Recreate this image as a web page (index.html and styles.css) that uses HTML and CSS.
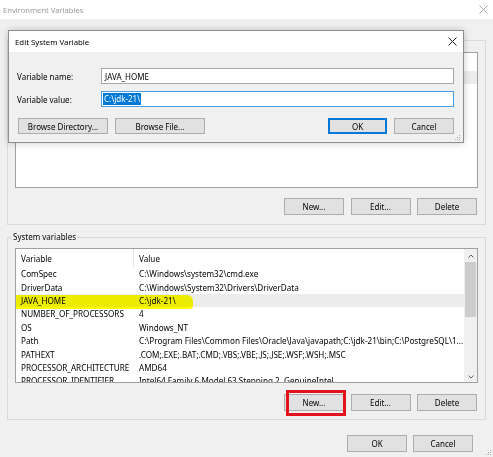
FILE: index.html
```html
<!DOCTYPE html>
<html>
<head>
<meta charset="utf-8">
<title>Environment Variables</title>
<link rel="stylesheet" href="styles.css">
</head>
<body>
<div class="window">
  <div class="titlebar">
    <span class="title">Environment Variables</span>
    <svg class="close-main" width="9" height="9" viewBox="0 0 9 9"><path d="M0.5 0.5 L8.5 8.5 M8.5 0.5 L0.5 8.5" stroke="#a8a8a8" stroke-width="1" fill="none"/></svg>
  </div>

  <div class="group user">
    <div class="group-label blank"></div>
    <div class="list">
      <div class="list-body">
        <div class="lhead"></div>
        <div class="row sel"></div>
      </div>
    </div>
    <div class="btnrow">
      <div class="btn">New...</div>
      <div class="btn">Edit...</div>
      <div class="btn">Delete</div>
    </div>
  </div>

  <div class="group system">
    <div class="group-label">System variables</div>
    <div class="list">
      <div class="list-body">
        <div class="lhead"><span class="c1">Variable</span><span class="c2">Value</span></div>
        <div class="row"><span class="c1">ComSpec</span><span class="c2">C:\Windows\system32\cmd.exe</span></div>
        <div class="row"><span class="c1">DriverData</span><span class="c2">C:\Windows\System32\Drivers\DriverData</span></div>
        <div class="row sel"><span class="mark"></span><span class="c1">JAVA_HOME</span><span class="c2">C:\jdk-21\</span></div>
        <div class="row"><span class="c1">NUMBER_OF_PROCESSORS</span><span class="c2">4</span></div>
        <div class="row"><span class="c1">OS</span><span class="c2">Windows_NT</span></div>
        <div class="row"><span class="c1">Path</span><span class="c2">C:\Program Files\Common Files\Oracle\Java\javapath;C:\jdk-21\bin;C:\PostgreSQL\1...</span></div>
        <div class="row"><span class="c1">PATHEXT</span><span class="c2">.COM;.EXE;.BAT;.CMD;.VBS;.VBE;.JS;.JSE;.WSF;.WSH;.MSC</span></div>
        <div class="row"><span class="c1">PROCESSOR_ARCHITECTURE</span><span class="c2">AMD64</span></div>
        <div class="row"><span class="c1">PROCESSOR_IDENTIFIER</span><span class="c2">Intel64 Family 6 Model 63 Stepping 2, GenuineIntel</span></div>
      </div>
      <div class="scrollbar">
        <div class="sb-arrow">
          <svg width="6" height="4" viewBox="0 0 6 4"><path d="M0.5 3.5 L3 1 L5.5 3.5" stroke="#606060" stroke-width="1" fill="none"/></svg>
        </div>
        <div class="sb-track"><div class="sb-thumb"></div></div>
        <div class="sb-arrow down">
          <svg width="6" height="4" viewBox="0 0 6 4"><path d="M0.5 0.5 L3 3 L5.5 0.5" stroke="#606060" stroke-width="1" fill="none"/></svg>
        </div>
      </div>
    </div>
    <div class="btnrow">
      <div class="btn-wrap"><div class="btn">New...</div><div class="redbox"></div></div>
      <div class="btn">Edit...</div>
      <div class="btn">Delete</div>
    </div>
  </div>

  <div class="footer">
    <div class="btn">OK</div>
    <div class="btn">Cancel</div>
  </div>

  <svg class="grip main-grip" width="6" height="6" viewBox="0 0 6 6"><g fill="#b0b0b0"><rect x="4" y="0" width="1" height="1"/><rect x="2" y="2" width="1" height="1"/><rect x="4" y="2" width="1" height="1"/><rect x="0" y="4" width="1" height="1"/><rect x="2" y="4" width="1" height="1"/><rect x="4" y="4" width="1" height="1"/></g></svg>

  <div class="dialog">
    <div class="dlg-title">
      <span>Edit System Variable</span>
      <svg width="9" height="9" viewBox="0 0 9 9"><path d="M0.5 0.5 L8.5 8.5 M8.5 0.5 L0.5 8.5" stroke="#1a1a1a" stroke-width="1" fill="none"/></svg>
    </div>
    <div class="dlg-body">
      <div class="field">
        <span class="flabel">Variable name:</span>
        <div class="input">JAVA_HOME</div>
      </div>
      <div class="field">
        <span class="flabel">Variable value:</span>
        <div class="input focus"><span class="selected">C:\jdk-21\</span></div>
      </div>
      <div class="dlg-buttons">
        <div class="btn wide">Browse Directory...</div>
        <div class="btn wide">Browse File...</div>
        <div class="spacer"></div>
        <div class="btn default">OK</div>
        <div class="btn">Cancel</div>
      </div>
    </div>
    <svg class="grip dlg-grip" width="6" height="6" viewBox="0 0 6 6"><g fill="#b0b0b0"><rect x="4" y="0" width="1" height="1"/><rect x="2" y="2" width="1" height="1"/><rect x="4" y="2" width="1" height="1"/><rect x="0" y="4" width="1" height="1"/><rect x="2" y="4" width="1" height="1"/><rect x="4" y="4" width="1" height="1"/></g></svg>
  </div>
</div>
</body>
</html>
```

FILE: styles.css
```css
* { box-sizing: border-box; }
html, body { margin: 0; padding: 0; }
body {
  width: 493px;
  height: 457px;
  overflow: hidden;
  background: #f0f0f0;
  font-family: "Segoe UI", "Noto Sans", sans-serif;
  font-size: 8px;
  color: #000;
}
.window {
  position: relative;
  width: 493px;
  height: 457px;
  display: flex;
  flex-direction: column;
}
.titlebar {
  height: 19px;
  background: #fff;
  display: flex;
  align-items: center;
  justify-content: space-between;
  padding: 0 5px 0 3px;
  color: #9a9a9a;
  font-size: 7.6px;
}

/* group boxes */
.group {
  margin: 0 7px;
  border: 1px solid #dadada;
  display: flex;
  flex-direction: column;
}
.group.user { margin-top: 21px; }
.group.system { margin-top: 12px; }
.group-label {
  align-self: flex-start;
  margin: -7px 0 0 4px;
  height: 12px;
  line-height: 12px;
  padding: 0 1px;
  background: #f0f0f0;
}
.group-label.blank { width: 10px; background: transparent; }
.list {
  margin: 5px 7px 0 7px;
  border: 1px solid #a0a0a0;
  background: #fff;
  display: flex;
  overflow: hidden;
  font-size: 8.15px;
}
.user .list { margin-top: 6px; height: 136px; }
.system .list { height: 135px; }
.list-body {
  flex: 1;
  min-width: 0;
  overflow: hidden;
}
.lhead {
  height: 18px;
  display: flex;
  align-items: center;
  background: #fff;
}
.lhead .c1 {
  height: 18px;
  border-right: 1px solid #e5e5e5;
}
.lhead span { display: flex; align-items: center; }
.row {
  position: relative;
  height: 13.4px;
  display: flex;
  align-items: center;
  white-space: nowrap;
}
.row.sel { background: #ececec; }
.c1 {
  width: 118px;
  flex: none;
  padding-left: 5px;
  white-space: nowrap;
  overflow: hidden;
}
.c2 {
  padding-left: 5px;
  white-space: nowrap;
}
.mark {
  position: absolute;
  left: -1px;
  top: 1.2px;
  width: 178px;
  height: 14px;
  background: #ffff00;
  border-radius: 2px 6px 4px 2px;
  mix-blend-mode: multiply;
  z-index: 1;
}

/* scrollbar */
.scrollbar {
  width: 13px;
  flex: none;
  background: #f0f0f0;
  display: flex;
  flex-direction: column;
}
.sb-arrow {
  height: 13px;
  display: flex;
  align-items: center;
  justify-content: center;
}
.sb-arrow.down { height: 14px; padding-top: 3px; }
.sb-track { flex: 1; padding: 0 1px; }
.sb-thumb {
  height: 55px;
  background: #cdcdcd;
}

/* buttons */
.btnrow {
  display: flex;
  justify-content: flex-end;
  gap: 6.5px;
  margin: 10px 8px 9px 0;
}
.system .btnrow { margin-top: 11px; margin-bottom: 8px; }
.btn {
  width: 60px;
  height: 17px;
  background: #e1e1e1;
  border: 1px solid #adadad;
  display: flex;
  align-items: center;
  justify-content: center;
  white-space: nowrap;
}
.btn-wrap { position: relative; }
.redbox {
  position: absolute;
  left: 2px;
  top: -4px;
  width: 60px;
  height: 26px;
  border: 3px solid #e5121d;
}
.footer {
  display: flex;
  justify-content: flex-end;
  gap: 6px;
  margin-top: 15px;
  padding-right: 20px;
}
.grip { position: absolute; }
.main-grip { right: 1px; bottom: 1px; }

/* dialog */
.dialog {
  position: absolute;
  left: 8px;
  top: 30px;
  width: 456px;
  height: 113px;
  border: 1px solid #8f8f8f;
  background: #f0f0f0;
  box-shadow: 0 0 7px rgba(0,0,0,0.22);
  display: flex;
  flex-direction: column;
}
.dlg-title {
  height: 21px;
  background: #fff;
  display: flex;
  align-items: center;
  justify-content: space-between;
  padding: 0 6px 0 6px;
  font-size: 7.8px;
}
.dlg-body {
  flex: 1;
  padding: 16px 9px 0 8px;
  display: flex;
  flex-direction: column;
}
.field {
  display: flex;
  align-items: center;
  height: 16px;
  margin-bottom: 7px;
}
.flabel { width: 84px; flex: none; }
.input {
  flex: 1;
  height: 16px;
  background: #fff;
  border: 1px solid #a8a8a8;
  display: flex;
  align-items: center;
  padding-left: 3px;
}
.input.focus { border-color: #4a9ee6; padding-left: 1px; }
.selected {
  background: #0078d7;
  color: #fff;
  padding: 1px 1px;
  line-height: 10px;
}
.dlg-buttons {
  display: flex;
  gap: 7px;
  margin-top: 4px;
  padding-left: 1px;
}
.dlg-buttons .btn { height: 16px; }
.btn.wide { width: 90px; }
.btn.default {
  width: 59px;
  border-color: #0078d7;
  box-shadow: inset 0 0 0 1px #0078d7;
}
.spacer { flex: 1; }
.dlg-grip { right: 2px; bottom: 1px; }
```
